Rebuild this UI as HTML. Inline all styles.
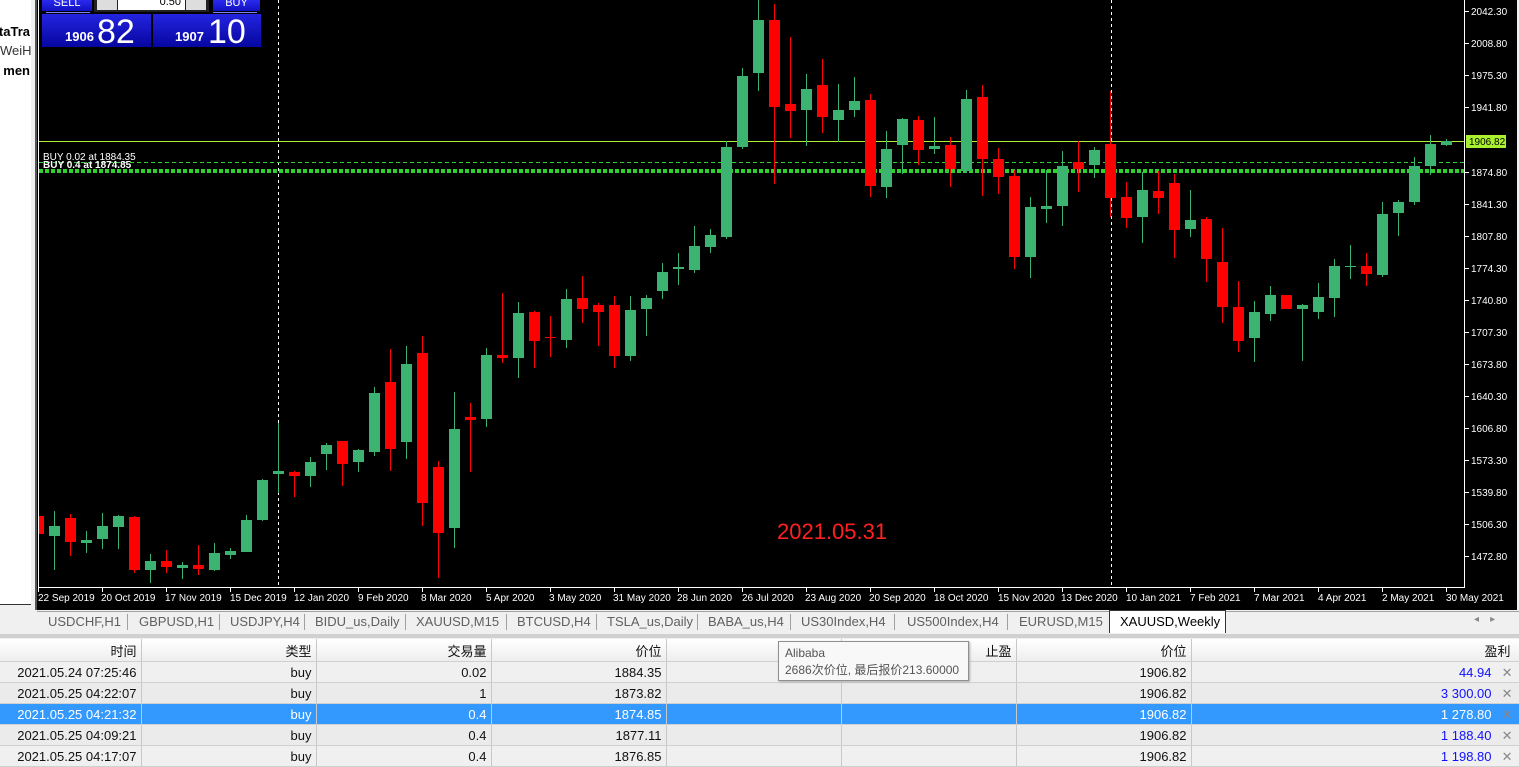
<!DOCTYPE html>
<html><head><meta charset="utf-8"><style>
*{margin:0;padding:0;box-sizing:border-box}
body{width:1519px;height:767px;overflow:hidden;background:#f0f0f0;font-family:"Liberation Sans","Noto Sans CJK SC",sans-serif;position:relative}
.abs{position:absolute}
.tab{position:absolute;top:612px;height:20px;font-size:13px;color:#606060;line-height:20px;white-space:nowrap}
.sep{position:absolute;top:614px;width:1px;height:16px;background:#a0a0a0}
table{position:absolute;left:0;top:639px;border-collapse:collapse;font-size:13px;table-layout:fixed}
td{height:21px;border-right:1px solid #c8c8c8;border-bottom:1px solid #d0d0d0;text-align:right;padding-right:4px;color:#111;white-space:nowrap;overflow:hidden;padding-top:1px}
tr.h td{height:22px;background:linear-gradient(#fff,#eee);color:#111}
tr.g td{background:#ebebeb}
tr.s td{background:#3399ff;color:#fff}
td.p{color:#1010ff;padding-right:27px;position:relative}
tr.s td.p{color:#fff}
.x{position:absolute;right:6px;top:3px;color:#888;font-size:13px}
</style></head><body>
<div class="abs" style="left:0;top:0;width:31px;height:605px;background:#fff"></div>
<div class="abs" style="left:0;top:604px;width:31px;height:1px;background:#333"></div>
<div class="abs" style="left:35px;top:0;width:2px;height:610px;background:#555"></div>
<div class="abs" style="left:0;top:24px;width:30px;font-size:13px;font-weight:bold;text-align:right;overflow:hidden;white-space:nowrap;direction:rtl">taTra</div>
<div class="abs" style="left:0;top:43px;width:30px;font-size:13px;text-align:right;color:#333">WeiH</div>
<div class="abs" style="left:0;top:63px;width:30px;font-size:13px;font-weight:bold;text-align:right">men</div>

<svg class="abs" style="left:37px;top:0" width="1482" height="610" viewBox="37 0 1482 610">
<rect x="37" y="0" width="1482" height="610" fill="#000"/>
<line x1="38.5" y1="0" x2="38.5" y2="588" stroke="#fff"/>
<line x1="1464.5" y1="0" x2="1464.5" y2="588" stroke="#fff"/>
<line x1="38" y1="587.5" x2="1465" y2="587.5" stroke="#fff"/>
<line x1="278.5" y1="0" x2="278.5" y2="587" stroke="#fff" stroke-dasharray="3,3"/>
<line x1="1111.5" y1="0" x2="1111.5" y2="587" stroke="#fff" stroke-dasharray="3,3"/>
<line x1="39" y1="141.5" x2="1464" y2="141.5" stroke="#a8f030"/>
<line x1="39" y1="162.5" x2="1464" y2="162.5" stroke="#30d030" stroke-dasharray="4,3"/>
<line x1="39" y1="171" x2="1464" y2="171" stroke="#30d030" stroke-width="4" stroke-dasharray="4,2"/>
<text x="43" y="160" fill="#fff" font-size="10" font-family="Liberation Sans">BUY 0.02 at 1884.35</text>
<text x="43" y="168" fill="#fff" font-size="10" font-weight="bold" font-family="Liberation Sans">BUY 0.4 at 1874.85</text>
<g stroke="#3cb371"><path d="M54.5 511V570M86.5 531V553M102.5 513V549M118.5 515V549M150.5 554V583M182.5 562V579M214.5 543V571M230.5 548V559M246.5 515V552M262.5 479V521M278.5 423V493M310.5 457V487M326.5 443V470M358.5 449V472M374.5 387V456M406.5 346V459M454.5 392V548M486.5 348V427M518.5 302V378M566.5 289V348M630.5 296V361M646.5 295V336M662.5 263V299M678.5 253V285M694.5 226V273M710.5 229V253M726.5 141V239M742.5 68V149M758.5 0V91M806.5 74V146M838.5 84V142M854.5 77V117M886.5 131V198M902.5 118V174M934.5 117V154M966.5 90V173M1030.5 197V278M1046.5 170V223M1062.5 151V226M1094.5 147V178M1142.5 172V243M1190.5 190V237M1254.5 301V362M1270.5 286V321M1302.5 304V361M1318.5 283V319M1334.5 259V317M1350.5 245V279M1382.5 202V277M1398.5 200V236M1414.5 157V205M1430.5 135V175M1446.5 139V146"/></g>
<g stroke="#ff0000"><path d="M70.5 514V556M134.5 516V573M166.5 550V573M198.5 545V575M294.5 471V497M342.5 441V486M390.5 349V471M422.5 336V526M438.5 461V578M470.5 403V472M502.5 293V363M534.5 311V368M550.5 316V357M582.5 276V323M598.5 303V346M614.5 296V368M774.5 4V184M790.5 37V138M822.5 59V133M870.5 94V197M918.5 116V165M950.5 137V187M982.5 85V196M998.5 148V194M1014.5 170V269M1078.5 141V192M1110.5 91V217M1126.5 182V228M1158.5 171V214M1174.5 174V258M1206.5 217V282M1222.5 228V323M1238.5 281V352M1366.5 253V286"/></g>
<g fill="#3cb371">
<rect x="49" y="526" width="11" height="10"/><rect x="81" y="540" width="11" height="3"/><rect x="97" y="526" width="11" height="13"/><rect x="113" y="516" width="11" height="11"/><rect x="145" y="561" width="11" height="9"/><rect x="177" y="565" width="11" height="3"/><rect x="209" y="553" width="11" height="17"/><rect x="225" y="551" width="11" height="4"/><rect x="241" y="520" width="11" height="32"/><rect x="257" y="480" width="11" height="40"/><rect x="273" y="471" width="11" height="3"/><rect x="305" y="462" width="11" height="14"/><rect x="321" y="445" width="11" height="9"/><rect x="353" y="450" width="11" height="12"/><rect x="369" y="393" width="11" height="59"/><rect x="401" y="364" width="11" height="78"/><rect x="449" y="429" width="11" height="99"/><rect x="481" y="355" width="11" height="64"/><rect x="513" y="313" width="11" height="45"/><rect x="561" y="299" width="11" height="41"/><rect x="625" y="310" width="11" height="46"/><rect x="641" y="298" width="11" height="11"/><rect x="657" y="272" width="11" height="19"/><rect x="673" y="267" width="11" height="2"/><rect x="689" y="246" width="11" height="24"/><rect x="705" y="235" width="11" height="12"/><rect x="721" y="147" width="11" height="90"/><rect x="737" y="76" width="11" height="71"/><rect x="753" y="20" width="11" height="53"/><rect x="801" y="89" width="11" height="21"/><rect x="833" y="110" width="11" height="10"/><rect x="849" y="101" width="11" height="9"/><rect x="881" y="149" width="11" height="38"/><rect x="897" y="119" width="11" height="26"/><rect x="929" y="146" width="11" height="3"/><rect x="961" y="99" width="11" height="72"/><rect x="1025" y="207" width="11" height="50"/><rect x="1041" y="206" width="11" height="3"/><rect x="1057" y="166" width="11" height="40"/><rect x="1089" y="150" width="11" height="15"/><rect x="1137" y="190" width="11" height="27"/><rect x="1185" y="220" width="11" height="9"/><rect x="1249" y="312" width="11" height="26"/><rect x="1265" y="295" width="11" height="19"/><rect x="1297" y="305" width="11" height="4"/><rect x="1313" y="297" width="11" height="15"/><rect x="1329" y="266" width="11" height="32"/><rect x="1345" y="266" width="11" height="1"/><rect x="1377" y="214" width="11" height="61"/><rect x="1393" y="202" width="11" height="11"/><rect x="1409" y="166" width="11" height="36"/><rect x="1425" y="144" width="11" height="22"/><rect x="1441" y="141" width="11" height="4"/>
</g>
<g fill="#ff0000">
<rect x="39" y="516" width="5" height="18"/><rect x="65" y="518" width="11" height="24"/><rect x="129" y="517" width="11" height="53"/><rect x="161" y="561" width="11" height="6"/><rect x="193" y="565" width="11" height="4"/><rect x="289" y="472" width="11" height="4"/><rect x="337" y="441" width="11" height="23"/><rect x="385" y="382" width="11" height="67"/><rect x="417" y="353" width="11" height="150"/><rect x="433" y="467" width="11" height="66"/><rect x="465" y="417" width="11" height="3"/><rect x="497" y="355" width="11" height="3"/><rect x="529" y="312" width="11" height="29"/><rect x="545" y="337" width="11" height="1"/><rect x="577" y="298" width="11" height="11"/><rect x="593" y="305" width="11" height="7"/><rect x="609" y="305" width="11" height="51"/><rect x="769" y="20" width="11" height="87"/><rect x="785" y="104" width="11" height="7"/><rect x="817" y="85" width="11" height="32"/><rect x="865" y="100" width="11" height="86"/><rect x="913" y="120" width="11" height="30"/><rect x="945" y="145" width="11" height="24"/><rect x="977" y="97" width="11" height="62"/><rect x="993" y="159" width="11" height="18"/><rect x="1009" y="176" width="11" height="81"/><rect x="1073" y="162" width="11" height="7"/><rect x="1105" y="144" width="11" height="54"/><rect x="1121" y="197" width="11" height="21"/><rect x="1153" y="191" width="11" height="7"/><rect x="1169" y="183" width="11" height="47"/><rect x="1201" y="219" width="11" height="40"/><rect x="1217" y="262" width="11" height="45"/><rect x="1233" y="307" width="11" height="34"/><rect x="1281" y="295" width="11" height="14"/><rect x="1361" y="266" width="11" height="8"/>
</g>
<g fill="#fff" font-size="10" font-family="Liberation Sans">
<g stroke="#fff"><path d="M1465 11.5h4M1465 43.5h4M1465 75.5h4M1465 107.5h4M1465 172.5h4M1465 204.5h4M1465 236.5h4M1465 268.5h4M1465 300.5h4M1465 332.5h4M1465 364.5h4M1465 396.5h4M1465 428.5h4M1465 460.5h4M1465 492.5h4M1465 524.5h4M1465 556.5h4"/></g>
<text x="1471" y="15">2042.30</text><text x="1471" y="47">2008.80</text><text x="1471" y="79">1975.30</text><text x="1471" y="111">1941.80</text><text x="1471" y="176">1874.80</text><text x="1471" y="208">1841.30</text><text x="1471" y="240">1807.80</text><text x="1471" y="272">1774.30</text><text x="1471" y="304">1740.80</text><text x="1471" y="336">1707.30</text><text x="1471" y="368">1673.80</text><text x="1471" y="400">1640.30</text><text x="1471" y="432">1606.80</text><text x="1471" y="464">1573.30</text><text x="1471" y="496">1539.80</text><text x="1471" y="528">1506.30</text><text x="1471" y="560">1472.80</text>
<rect x="1466" y="135" width="40" height="13" fill="#a8f030"/><text x="1469" y="145" fill="#000">1906.82</text>
<g stroke="#fff"><path d="M38.5 588v4M102.5 588v4M166.5 588v4M230.5 588v4M294.5 588v4M358.5 588v4M422.5 588v4M486.5 588v4M550.5 588v4M614.5 588v4M678.5 588v4M742.5 588v4M806.5 588v4M870.5 588v4M934.5 588v4M998.5 588v4M1062.5 588v4M1126.5 588v4M1190.5 588v4M1254.5 588v4M1318.5 588v4M1382.5 588v4M1446.5 588v4"/></g>
<text x="38" y="601">22 Sep 2019</text><text x="101" y="601">20 Oct 2019</text><text x="165" y="601">17 Nov 2019</text><text x="230" y="601">15 Dec 2019</text><text x="294" y="601">12 Jan 2020</text><text x="358" y="601">9 Feb 2020</text><text x="421" y="601">8 Mar 2020</text><text x="486" y="601">5 Apr 2020</text><text x="549" y="601">3 May 2020</text><text x="613" y="601">31 May 2020</text><text x="677" y="601">28 Jun 2020</text><text x="742" y="601">26 Jul 2020</text><text x="805" y="601">23 Aug 2020</text><text x="869" y="601">20 Sep 2020</text><text x="934" y="601">18 Oct 2020</text><text x="998" y="601">15 Nov 2020</text><text x="1061" y="601">13 Dec 2020</text><text x="1126" y="601">10 Jan 2021</text><text x="1190" y="601">7 Feb 2021</text><text x="1254" y="601">7 Mar 2021</text><text x="1318" y="601">4 Apr 2021</text><text x="1382" y="601">2 May 2021</text><text x="1446" y="601">30 May 2021</text>
</g>
<text x="777" y="539" fill="#ff2020" font-size="22" font-family="Liberation Sans">2021.05.31</text>
<rect x="1517" y="0" width="2" height="610" fill="#f0f0f0"/>
</svg>

<div class="abs" style="left:42px;top:0;width:50px;height:11px;background:linear-gradient(#2a2af0,#1010c0);color:#fff;font-size:11px;text-align:center;line-height:6px">SELL</div>
<div class="abs" style="left:94px;top:0;width:115px;height:12px;background:#222"></div>
<div class="abs" style="left:97px;top:0;width:20px;height:10px;background:#ddd"></div>
<div class="abs" style="left:118px;top:0;width:67px;height:10px;background:#fff;font-size:11px;text-align:right;padding-right:4px;line-height:4px">0.50</div>
<div class="abs" style="left:186px;top:0;width:20px;height:10px;background:#ddd"></div>
<div class="abs" style="left:213px;top:0;width:47px;height:11px;background:linear-gradient(#2a2af0,#1010c0);color:#fff;font-size:11px;text-align:center;line-height:6px">BUY</div>
<div class="abs" style="left:46px;top:12px;width:44px;height:1px;background:#8080ff"></div>
<div class="abs" style="left:213px;top:12px;width:44px;height:1px;background:#8080ff"></div>
<div class="abs" style="left:42px;top:14px;width:109px;height:33px;background:linear-gradient(#2424e0,#0606a0);color:#fff;white-space:nowrap">
<span class="abs" style="left:23px;top:15px;font-size:13px;font-weight:bold">1906</span><span class="abs" style="left:55px;top:-1px;font-size:34px">82</span></div>
<div class="abs" style="left:153px;top:14px;width:108px;height:33px;background:linear-gradient(#2424e0,#0606a0);color:#fff;white-space:nowrap">
<span class="abs" style="left:22px;top:15px;font-size:13px;font-weight:bold">1907</span><span class="abs" style="left:55px;top:-1px;font-size:34px">10</span></div>

<div class="abs" style="left:37px;top:611px;width:1482px;height:1px;background:#a0a0a0"></div>
<div class="tab" style="left:48px">USDCHF,H1</div><div class="sep" style="left:127px"></div>
<div class="tab" style="left:139px">GBPUSD,H1</div><div class="sep" style="left:219px"></div>
<div class="tab" style="left:230px">USDJPY,H4</div><div class="sep" style="left:304px"></div>
<div class="tab" style="left:315px">BIDU_us,Daily</div><div class="sep" style="left:405px"></div>
<div class="tab" style="left:416px">XAUUSD,M15</div><div class="sep" style="left:506px"></div>
<div class="tab" style="left:517px">BTCUSD,H4</div><div class="sep" style="left:596px"></div>
<div class="tab" style="left:607px">TSLA_us,Daily</div><div class="sep" style="left:697px"></div>
<div class="tab" style="left:708px">BABA_us,H4</div><div class="sep" style="left:790px"></div>
<div class="tab" style="left:801px">US30Index,H4</div><div class="sep" style="left:894px"></div>
<div class="tab" style="left:907px">US500Index,H4</div><div class="sep" style="left:1007px"></div>
<div class="tab" style="left:1019px">EURUSD,M15</div>
<div class="abs" style="left:1109px;top:610px;width:117px;height:23px;background:#fff;border:1px solid #333;border-bottom:none;font-size:13px;line-height:22px;padding-left:10px;color:#000">XAUUSD,Weekly</div>
<div class="abs" style="left:1474px;top:614px;font-size:10px;color:#888">◂&nbsp;&nbsp;&nbsp;&nbsp;▸</div>
<div class="abs" style="left:0;top:634px;width:1519px;height:4px;background:#d0d0d0"></div>

<table style="width:1519px">
<colgroup><col style="width:141px"><col style="width:175px"><col style="width:175px"><col style="width:175px"><col style="width:175px"><col style="width:175px"><col style="width:175px"><col style="width:328px"></colgroup>
<tr class="h"><td>时间</td><td>类型</td><td>交易量</td><td>价位</td><td>止损</td><td>止盈</td><td>价位</td><td style="padding-right:8px">盈利</td></tr>
<tr><td>2021.05.24 07:25:46</td><td>buy</td><td>0.02</td><td>1884.35</td><td></td><td></td><td>1906.82</td><td class="p">44.94<span class="x">✕</span></td></tr>
<tr class="g"><td>2021.05.25 04:22:07</td><td>buy</td><td>1</td><td>1873.82</td><td></td><td></td><td>1906.82</td><td class="p">3 300.00<span class="x">✕</span></td></tr>
<tr class="s"><td>2021.05.25 04:21:32</td><td>buy</td><td>0.4</td><td>1874.85</td><td></td><td></td><td>1906.82</td><td class="p">1 278.80<span class="x">✕</span></td></tr>
<tr class="g"><td>2021.05.25 04:09:21</td><td>buy</td><td>0.4</td><td>1877.11</td><td></td><td></td><td>1906.82</td><td class="p">1 188.40<span class="x">✕</span></td></tr>
<tr><td>2021.05.25 04:17:07</td><td>buy</td><td>0.4</td><td>1876.85</td><td></td><td></td><td>1906.82</td><td class="p">1 198.80<span class="x">✕</span></td></tr>
</table>

<div class="abs" style="left:778px;top:641px;width:191px;height:40px;background:#f8f8f8;border:1px solid #909090;box-shadow:1px 1px 2px #aaa;font-size:12px;color:#555;padding:3px 0 0 6px;line-height:17px;white-space:nowrap">Alibaba<br>2686次价位, 最后报价213.60000</div>
</body></html>
